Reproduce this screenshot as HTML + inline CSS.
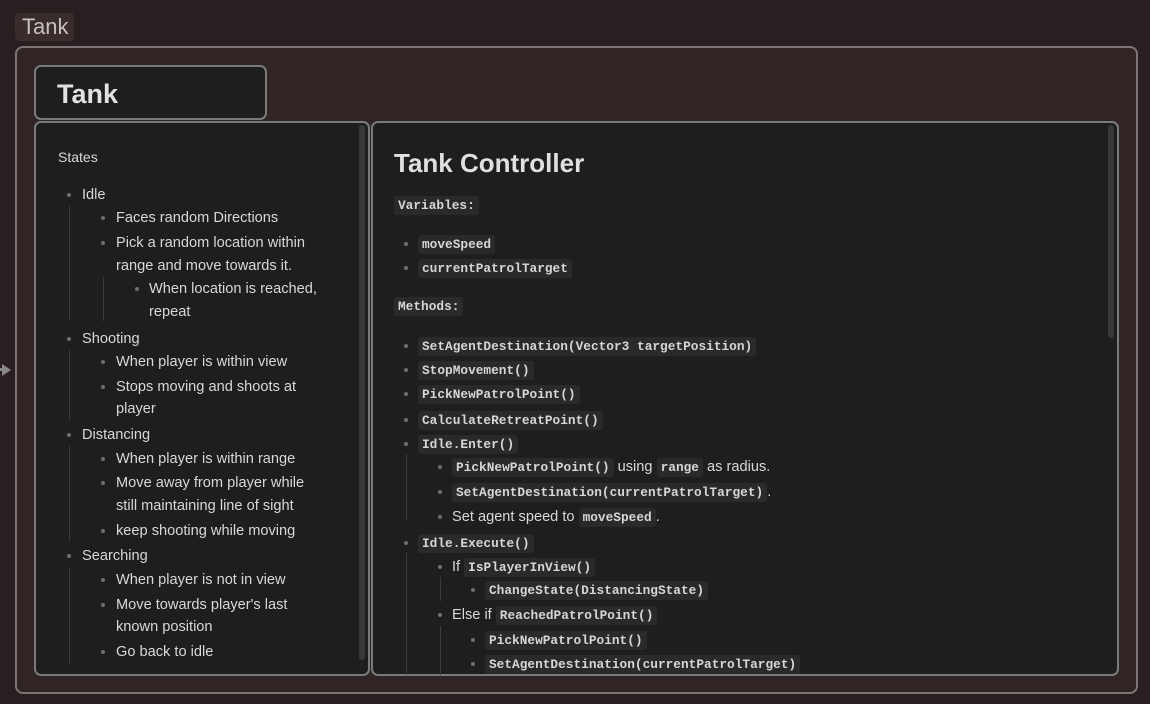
<!DOCTYPE html>
<html><head><meta charset="utf-8"><style>
*{margin:0;padding:0;box-sizing:border-box}
body{width:1150px;height:704px;overflow:hidden;background:#2a1f20;position:relative;font-family:"Liberation Sans",sans-serif;color:#dadada}
.a{position:absolute}
.t{position:absolute;font-size:14.6px;line-height:20px;white-space:nowrap;color:#d8d8d8;margin-top:1px}
.b{position:absolute;width:4px;height:4px;border-radius:50%;background:#6e6e6e;margin-top:1px}
.g{position:absolute;width:1px;background:#3c3c3c}
code{font-family:"Liberation Mono",monospace;font-size:12.8px;font-weight:bold;background:#2a2a2a;border-radius:3px;padding:2px 4px;color:#d6d6d6}
.c{position:absolute;white-space:nowrap;line-height:20px;font-size:14.6px;color:#d8d8d8;margin-top:1px}
</style></head><body>
<div class="a" style="left:15px;top:13px;width:59px;height:28px;background:#382c2d;border-radius:4px"></div>
<div class="t" style="left:22px;top:14px;font-size:22px;line-height:24px;color:#c8c0c0">Tank</div>
<div class="a" style="left:15px;top:46px;width:1123px;height:648px;border:2px solid #7c7576;border-radius:8px;background:#302425"></div>
<div class="a" style="left:2px;top:364px;width:0;height:0;border-top:6px solid transparent;border-bottom:6px solid transparent;border-left:9px solid #888"></div>
<div class="a" style="left:0;top:368px;width:6px;height:3px;background:#888"></div>

<div class="a" style="left:34px;top:65px;width:233px;height:55px;border:2px solid #7a7a7a;border-radius:7px;background:#1e1e1e"></div>
<div class="t" style="left:57px;top:78px;font-size:27px;line-height:30px;font-weight:bold;color:#e2e2e2">Tank</div>

<div class="a" style="left:34px;top:121px;width:336px;height:555px;border:2px solid #7a7a7a;border-radius:7px;background:#1e1e1e"></div>
<div class="a" style="left:359px;top:125px;width:6px;height:535px;background:#383838;border-radius:3px"></div>
<div class="a" style="left:371px;top:121px;width:748px;height:555px;border:2px solid #7a7a7a;border-radius:7px;background:#1e1e1e"></div>
<div class="a" style="left:1108px;top:125px;width:6px;height:213px;background:#383838;border-radius:3px"></div>

<!-- left -->
<div class="t" style="left:58px;top:146px;font-size:14px">States</div>
<div class="g" style="left:69px;top:206px;height:114px"></div>
<div class="g" style="left:103px;top:277px;height:44px"></div>
<div class="g" style="left:69px;top:350px;height:70px"></div>
<div class="g" style="left:69px;top:446px;height:95px"></div>
<div class="g" style="left:69px;top:567px;height:97px"></div>

<div class="b" style="left:67px;top:192px"></div><div class="t" style="left:82px;top:184px">Idle</div>
<div class="b" style="left:101px;top:215px"></div><div class="t" style="left:116px;top:207px">Faces random Directions</div>
<div class="b" style="left:101px;top:240px"></div><div class="t" style="left:116px;top:232px">Pick a random location within</div>
<div class="t" style="left:116px;top:255px">range and move towards it.</div>
<div class="b" style="left:135px;top:286px"></div><div class="t" style="left:149px;top:278px">When location is reached,</div>
<div class="t" style="left:149px;top:301px">repeat</div>
<div class="b" style="left:67px;top:336px"></div><div class="t" style="left:82px;top:328px">Shooting</div>
<div class="b" style="left:101px;top:359px"></div><div class="t" style="left:116px;top:351px">When player is within view</div>
<div class="b" style="left:101px;top:384px"></div><div class="t" style="left:116px;top:376px">Stops moving and shoots at</div>
<div class="t" style="left:116px;top:398px">player</div>
<div class="b" style="left:67px;top:432px"></div><div class="t" style="left:82px;top:424px">Distancing</div>
<div class="b" style="left:101px;top:456px"></div><div class="t" style="left:116px;top:448px">When player is within range</div>
<div class="b" style="left:101px;top:480px"></div><div class="t" style="left:116px;top:472px">Move away from player while</div>
<div class="t" style="left:116px;top:495px">still maintaining line of sight</div>
<div class="b" style="left:101px;top:528px"></div><div class="t" style="left:116px;top:520px">keep shooting while moving</div>
<div class="b" style="left:67px;top:553px"></div><div class="t" style="left:82px;top:545px">Searching</div>
<div class="b" style="left:101px;top:577px"></div><div class="t" style="left:116px;top:569px">When player is not in view</div>
<div class="b" style="left:101px;top:602px"></div><div class="t" style="left:116px;top:594px">Move towards player's last</div>
<div class="t" style="left:116px;top:616px">known position</div>
<div class="b" style="left:101px;top:649px"></div><div class="t" style="left:116px;top:641px">Go back to idle</div>

<!-- right -->
<div class="t" style="left:394px;top:146px;font-size:26px;line-height:32px;font-weight:bold;color:#e0e0e0">Tank Controller</div>
<div class="c" style="left:394px;top:194px"><code>Variables:</code></div>
<div class="b" style="left:404px;top:241px"></div><div class="c" style="left:418px;top:233px"><code>moveSpeed</code></div>
<div class="b" style="left:404px;top:265px"></div><div class="c" style="left:418px;top:257px"><code>currentPatrolTarget</code></div>
<div class="c" style="left:394px;top:295px"><code>Methods:</code></div>
<div class="b" style="left:404px;top:343px"></div><div class="c" style="left:418px;top:335px"><code>SetAgentDestination(Vector3 targetPosition)</code></div>
<div class="b" style="left:404px;top:367px"></div><div class="c" style="left:418px;top:359px"><code>StopMovement()</code></div>
<div class="b" style="left:404px;top:391px"></div><div class="c" style="left:418px;top:383px"><code>PickNewPatrolPoint()</code></div>
<div class="b" style="left:404px;top:417px"></div><div class="c" style="left:418px;top:409px"><code>CalculateRetreatPoint()</code></div>
<div class="b" style="left:404px;top:441px"></div><div class="c" style="left:418px;top:433px"><code>Idle.Enter()</code></div>
<div class="g" style="left:406px;top:454px;height:66px"></div>
<div class="b" style="left:438px;top:464px"></div><div class="c" style="left:452px;top:456px"><code>PickNewPatrolPoint()</code> using <code>range</code> as radius.</div>
<div class="b" style="left:438px;top:489px"></div><div class="c" style="left:452px;top:481px"><code>SetAgentDestination(currentPatrolTarget)</code>.</div>
<div class="b" style="left:438px;top:514px"></div><div class="c" style="left:452px;top:506px">Set agent speed to <code>moveSpeed</code>.</div>
<div class="b" style="left:404px;top:540px"></div><div class="c" style="left:418px;top:532px"><code>Idle.Execute()</code></div>
<div class="g" style="left:406px;top:553px;height:122px"></div>
<div class="b" style="left:438px;top:564px"></div><div class="c" style="left:452px;top:556px">If <code>IsPlayerInView()</code></div>
<div class="g" style="left:440px;top:577px;height:24px"></div>
<div class="b" style="left:471px;top:587px"></div><div class="c" style="left:485px;top:579px"><code>ChangeState(DistancingState)</code></div>
<div class="b" style="left:438px;top:612px"></div><div class="c" style="left:452px;top:604px">Else if <code>ReachedPatrolPoint()</code></div>
<div class="g" style="left:440px;top:626px;height:49px"></div>
<div class="b" style="left:471px;top:637px"></div><div class="c" style="left:485px;top:629px"><code>PickNewPatrolPoint()</code></div>
<div class="b" style="left:471px;top:661px"></div><div class="c" style="left:485px;top:653px"><code>SetAgentDestination(currentPatrolTarget)</code></div>
</body></html>
